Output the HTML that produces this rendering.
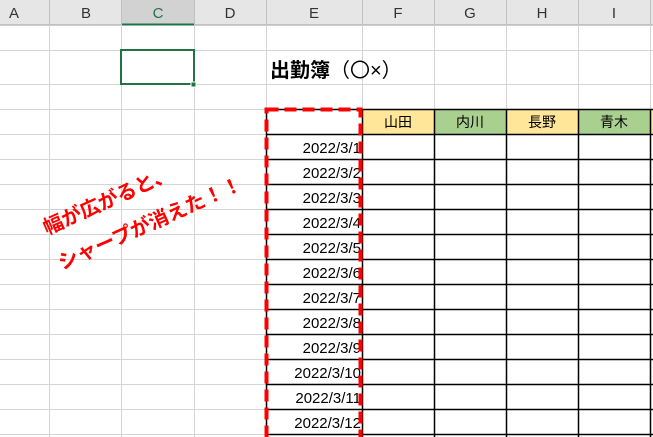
<!DOCTYPE html>
<html><head><meta charset="utf-8"><style>
html,body{margin:0;padding:0;width:653px;height:437px;overflow:hidden;background:#fff}
svg{display:block}
text{font-family:"Liberation Sans","Noto Sans CJK JP",sans-serif}
</style></head><body>
<svg width="653" height="437" viewBox="0 0 653 437" xmlns="http://www.w3.org/2000/svg">
<rect x="0" y="0" width="653" height="25" fill="#e6e6e6"/>
<rect x="121" y="0" width="73" height="25" fill="#d2d2d2"/>
<line x1="0" y1="25" x2="653" y2="25" stroke="#9b9b9b"/>
<line x1="121" y1="24.5" x2="194" y2="24.5" stroke="#217346" stroke-width="2"/>
<g stroke="#c0c0c0">
<line x1="49.5" y1="0" x2="49.5" y2="25"/><line x1="121.5" y1="0" x2="121.5" y2="25"/><line x1="194.5" y1="0" x2="194.5" y2="25"/><line x1="266.5" y1="0" x2="266.5" y2="25"/><line x1="362.5" y1="0" x2="362.5" y2="25"/><line x1="434.5" y1="0" x2="434.5" y2="25"/><line x1="506.5" y1="0" x2="506.5" y2="25"/><line x1="578.5" y1="0" x2="578.5" y2="25"/><line x1="650.5" y1="0" x2="650.5" y2="25"/>
</g>
<g font-size="15" fill="#333" text-anchor="middle">
<text x="14" y="18">A</text><text x="86" y="18">B</text><text x="158" y="18" fill="#217346">C</text><text x="230" y="18">D</text><text x="314" y="18">E</text><text x="398" y="18">F</text><text x="470" y="18">G</text><text x="542" y="18">H</text><text x="614" y="18">I</text>
</g>
<g stroke="#d4d4d4">
<line x1="49.5" y1="25" x2="49.5" y2="437"/><line x1="121.5" y1="25" x2="121.5" y2="437"/><line x1="194.5" y1="25" x2="194.5" y2="437"/><line x1="266.5" y1="25" x2="266.5" y2="437"/><line x1="362.5" y1="25" x2="362.5" y2="109"/><line x1="434.5" y1="25" x2="434.5" y2="109"/><line x1="506.5" y1="25" x2="506.5" y2="109"/><line x1="578.5" y1="25" x2="578.5" y2="109"/><line x1="650.5" y1="25" x2="650.5" y2="109"/>
<line x1="0" y1="50.5" x2="653" y2="50.5"/><line x1="0" y1="84.5" x2="653" y2="84.5"/><line x1="0" y1="109.5" x2="653" y2="109.5"/>
<line x1="0" y1="134.5" x2="266" y2="134.5"/><line x1="0" y1="159.5" x2="266" y2="159.5"/><line x1="0" y1="184.5" x2="266" y2="184.5"/><line x1="0" y1="209.5" x2="266" y2="209.5"/><line x1="0" y1="234.5" x2="266" y2="234.5"/><line x1="0" y1="259.5" x2="266" y2="259.5"/><line x1="0" y1="284.5" x2="266" y2="284.5"/><line x1="0" y1="309.5" x2="266" y2="309.5"/><line x1="0" y1="334.5" x2="266" y2="334.5"/><line x1="0" y1="359.5" x2="266" y2="359.5"/><line x1="0" y1="384.5" x2="266" y2="384.5"/><line x1="0" y1="409.5" x2="266" y2="409.5"/><line x1="0" y1="434.5" x2="266" y2="434.5"/>
</g>
<rect x="121" y="50" width="73" height="34" fill="none" stroke="#217346" stroke-width="2"/>
<rect x="191" y="82" width="5" height="5" fill="#217346" stroke="#fff" stroke-width="1"/>
<text x="270" y="77" font-size="20" font-weight="bold" fill="#000">出勤簿<tspan font-weight="normal">（〇×）</tspan></text>
<rect x="362" y="109" width="72" height="25" fill="#ffe699"/>
<rect x="434" y="109" width="72" height="25" fill="#a9d08e"/>
<rect x="506" y="109" width="72" height="25" fill="#ffe699"/>
<rect x="578" y="109" width="72" height="25" fill="#a9d08e"/>
<rect x="650" y="109" width="5" height="25" fill="#ffe699"/>
<g font-size="14" fill="#000" text-anchor="middle">
<text x="398" y="127">山田</text><text x="470" y="127">内川</text><text x="542" y="127">長野</text><text x="614" y="127">青木</text>
</g>
<g stroke="#000" stroke-width="1.5">
<line x1="266.5" y1="109" x2="266.5" y2="437"/><line x1="362.5" y1="109" x2="362.5" y2="437"/><line x1="434.5" y1="109" x2="434.5" y2="437"/><line x1="506.5" y1="109" x2="506.5" y2="437"/><line x1="578.5" y1="109" x2="578.5" y2="437"/><line x1="650.5" y1="109" x2="650.5" y2="437"/>
<line x1="266" y1="109.5" x2="653" y2="109.5"/><line x1="266" y1="134.5" x2="653" y2="134.5"/><line x1="266" y1="159.5" x2="653" y2="159.5"/><line x1="266" y1="184.5" x2="653" y2="184.5"/><line x1="266" y1="209.5" x2="653" y2="209.5"/><line x1="266" y1="234.5" x2="653" y2="234.5"/><line x1="266" y1="259.5" x2="653" y2="259.5"/><line x1="266" y1="284.5" x2="653" y2="284.5"/><line x1="266" y1="309.5" x2="653" y2="309.5"/><line x1="266" y1="334.5" x2="653" y2="334.5"/><line x1="266" y1="359.5" x2="653" y2="359.5"/><line x1="266" y1="384.5" x2="653" y2="384.5"/><line x1="266" y1="409.5" x2="653" y2="409.5"/><line x1="266" y1="434.5" x2="653" y2="434.5"/>
</g>
<g font-size="15" fill="#000" text-anchor="end">
<text x="361" y="153">2022/3/1</text><text x="361" y="178">2022/3/2</text><text x="361" y="203">2022/3/3</text><text x="361" y="228">2022/3/4</text><text x="361" y="253">2022/3/5</text><text x="361" y="278">2022/3/6</text><text x="361" y="303">2022/3/7</text><text x="361" y="328">2022/3/8</text><text x="361" y="353">2022/3/9</text><text x="361" y="378">2022/3/10</text><text x="361" y="403">2022/3/11</text><text x="361" y="428">2022/3/12</text>
</g>
<rect x="266.5" y="109.5" width="94" height="340" fill="none" stroke="#ff0000" stroke-width="4" stroke-dasharray="12,6"/>
<g font-size="20" font-weight="bold" fill="#ff0000">
<text transform="translate(47,235) rotate(-24)">幅が広がると、</text>
<text transform="translate(62,270) rotate(-24)">シャープが消えた！！</text>
</g>
</svg>
</body></html>
